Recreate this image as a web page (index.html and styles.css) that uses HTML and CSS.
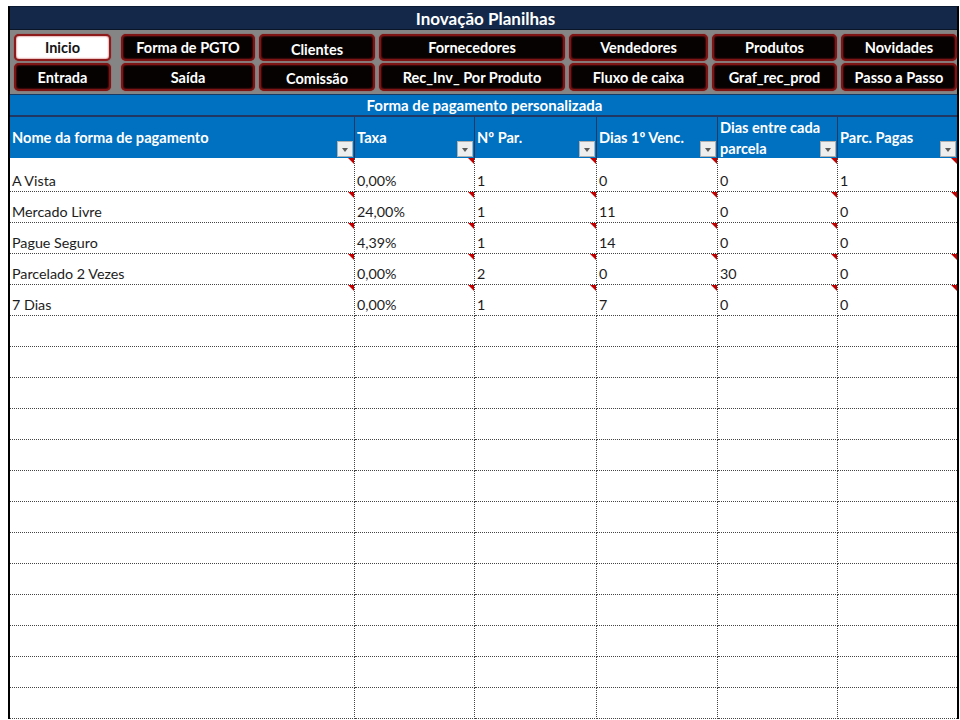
FILE: index.html
```html
<!DOCTYPE html>
<html lang="pt-BR">
<head>
<meta charset="utf-8">
<title>Inovação Planilhas</title>
<link rel="stylesheet" href="styles.css">
</head>
<body>
<div class="sheet">
  <div class="title">Inovação Planilhas</div>
  <nav class="menu">
    <div class="btn active">Inicio</div>
    <div class="btn">Forma de PGTO</div>
    <div class="btn low">Clientes</div>
    <div class="btn">Fornecedores</div>
    <div class="btn">Vendedores</div>
    <div class="btn">Produtos</div>
    <div class="btn">Novidades</div>
    <div class="btn">Entrada</div>
    <div class="btn">Saída</div>
    <div class="btn low">Comissão</div>
    <div class="btn">Rec_Inv_ Por Produto</div>
    <div class="btn">Fluxo de caixa</div>
    <div class="btn">Graf_rec_prod</div>
    <div class="btn">Passo a Passo</div>
  </nav>
  <div class="band">Forma de pagamento personalizada</div>
  <table class="grid">
    <colgroup>
      <col class="c1"><col class="c2"><col class="c3"><col class="c4"><col class="c5"><col class="c6">
    </colgroup>
    <thead>
      <tr>
        <th><div class="hc"><span class="ht">Nome da forma de pagamento</span><span class="flt"></span></div></th>
        <th><div class="hc"><span class="ht">Taxa</span><span class="flt"></span></div></th>
        <th><div class="hc"><span class="ht">Nº Par.</span><span class="flt"></span></div></th>
        <th><div class="hc"><span class="ht">Dias 1º Venc.</span><span class="flt"></span></div></th>
        <th><div class="hc"><span class="ht">Dias entre cada<br>parcela</span><span class="flt"></span></div></th>
        <th><div class="hc"><span class="ht">Parc. Pagas</span><span class="flt"></span></div></th>
      </tr>
    </thead>
    <tbody>
      <tr class="first"><td class="cm">A Vista</td><td class="cm">0,00%</td><td class="cm">1</td><td class="cm">0</td><td class="cm">0</td><td class="cm">1</td></tr>
      <tr><td class="cm">Mercado Livre</td><td class="cm">24,00%</td><td class="cm">1</td><td class="cm">11</td><td class="cm">0</td><td class="cm">0</td></tr>
      <tr><td class="cm">Pague Seguro</td><td class="cm">4,39%</td><td class="cm">1</td><td class="cm">14</td><td class="cm">0</td><td>0</td></tr>
      <tr><td class="cm">Parcelado 2 Vezes</td><td class="cm">0,00%</td><td class="cm">2</td><td class="cm">0</td><td class="cm">30</td><td class="cm">0</td></tr>
      <tr><td class="cm">7 Dias</td><td class="cm">0,00%</td><td class="cm">1</td><td class="cm">7</td><td class="cm">0</td><td class="cm">0</td></tr>
      <tr><td></td><td></td><td></td><td></td><td></td><td></td></tr>
      <tr><td></td><td></td><td></td><td></td><td></td><td></td></tr>
      <tr><td></td><td></td><td></td><td></td><td></td><td></td></tr>
      <tr><td></td><td></td><td></td><td></td><td></td><td></td></tr>
      <tr><td></td><td></td><td></td><td></td><td></td><td></td></tr>
      <tr><td></td><td></td><td></td><td></td><td></td><td></td></tr>
      <tr><td></td><td></td><td></td><td></td><td></td><td></td></tr>
      <tr><td></td><td></td><td></td><td></td><td></td><td></td></tr>
      <tr><td></td><td></td><td></td><td></td><td></td><td></td></tr>
      <tr><td></td><td></td><td></td><td></td><td></td><td></td></tr>
      <tr><td></td><td></td><td></td><td></td><td></td><td></td></tr>
      <tr><td></td><td></td><td></td><td></td><td></td><td></td></tr>
      <tr><td></td><td></td><td></td><td></td><td></td><td></td></tr>
    </tbody>
  </table>
</div>
</body>
</html>
```
FILE: styles.css
```css
* { box-sizing: border-box; }
html, body { margin: 0; padding: 0; background: #ffffff; }
body { font-family: "Lato", "Liberation Sans", sans-serif; overflow: hidden; height: 720px; }

.sheet {
  margin: 6px 0 0 8px;
  width: 951px;
  border-left: 2px solid #000;
  border-right: 2px solid #000;
  border-top: 1px solid #0b1a33;
}

.title {
  height: 23px;
  background: #14294a;
  color: #fff;
  font-weight: 700;
  font-size: 17px;
  line-height: 23px;
  text-align: center;
  padding-left: 4px;
  border-bottom: 1px solid #0a1528;
}

.menu {
  background: #858585;
  display: grid;
  grid-template-columns: 103px 134px 116px 186px 139px 125px 116px;
  grid-template-rows: 27px 28px;
  column-gap: 4px;
  row-gap: 2px;
  padding: 4px 0 3px 4px;
}

.btn {
  background: #060202;
  color: #fff;
  font-weight: 700;
  font-size: 14.5px;
  border: 2px solid #7e1414;
  border-radius: 5px;
  box-shadow: inset 0 0 2px #b52020, 0 0 1px #a01818;
  display: flex;
  align-items: center;
  justify-content: center;
  white-space: nowrap;
}
.btn:nth-child(7n+1) { width: 97px; }
.btn.low { padding-top: 3px; }
.btn.active { background: #ffffff; color: #151515; border-color: #8e1b1b; }

.band {
  height: 23px;
  background: #0070c0;
  border-top: 1px solid #1a3a64;
  border-bottom: 2px solid #1f3864;
  color: #fff;
  font-weight: 700;
  font-size: 15px;
  line-height: 20px;
  text-align: center;
  padding-left: 2px;
}

.grid {
  width: 947px;
  table-layout: fixed;
  border-collapse: separate;
  border-spacing: 0;
}
.c1 { width: 345px; }
.c2 { width: 120px; }
.c3 { width: 122px; }
.c4 { width: 121px; }
.c5 { width: 120px; }
.c6 { width: 119px; }

.grid th {
  background: #0070c0;
  color: #fff;
  font-weight: 700;
  font-size: 14.6px;
  text-align: left;
  padding: 0;
  height: 41px;
  border-right: 1px solid #1f3864;
  vertical-align: top;
}
.grid th:last-child { border-right: none; }

.hc {
  height: 41px;
  display: flex;
  justify-content: space-between;
  padding: 0 1px 1px 2px;
}
.ht { align-self: center; line-height: 21px; padding-top: 1px; white-space: nowrap; }
.flt {
  align-self: flex-end;
  flex: none;
  width: 16px;
  height: 16px;
  background: #eeeeee;
  border: 1px solid #b0b0b0;
  position: relative;
}
.flt::after {
  content: "";
  position: absolute;
  left: 4px;
  top: 6px;
  border-left: 3.5px solid transparent;
  border-right: 3.5px solid transparent;
  border-top: 4px solid #5a5a5a;
}

.grid td {
  height: 31px;
  padding: 0 2px 2px 2px;
  font-size: 14.3px;
  color: #1c1c1c;
  line-height: 17px;
  vertical-align: bottom;
  border-right: 1px dotted #444;
  border-bottom: 1px dotted #444;
  position: relative;
  white-space: nowrap;
}
.grid tr.first td { height: 34px; }
.grid td:last-child { border-right: none; }

.grid td.cm::after {
  content: "";
  position: absolute;
  right: 0;
  top: 0;
  border-top: 6px solid #c00000;
  border-left: 6px solid transparent;
}
```
